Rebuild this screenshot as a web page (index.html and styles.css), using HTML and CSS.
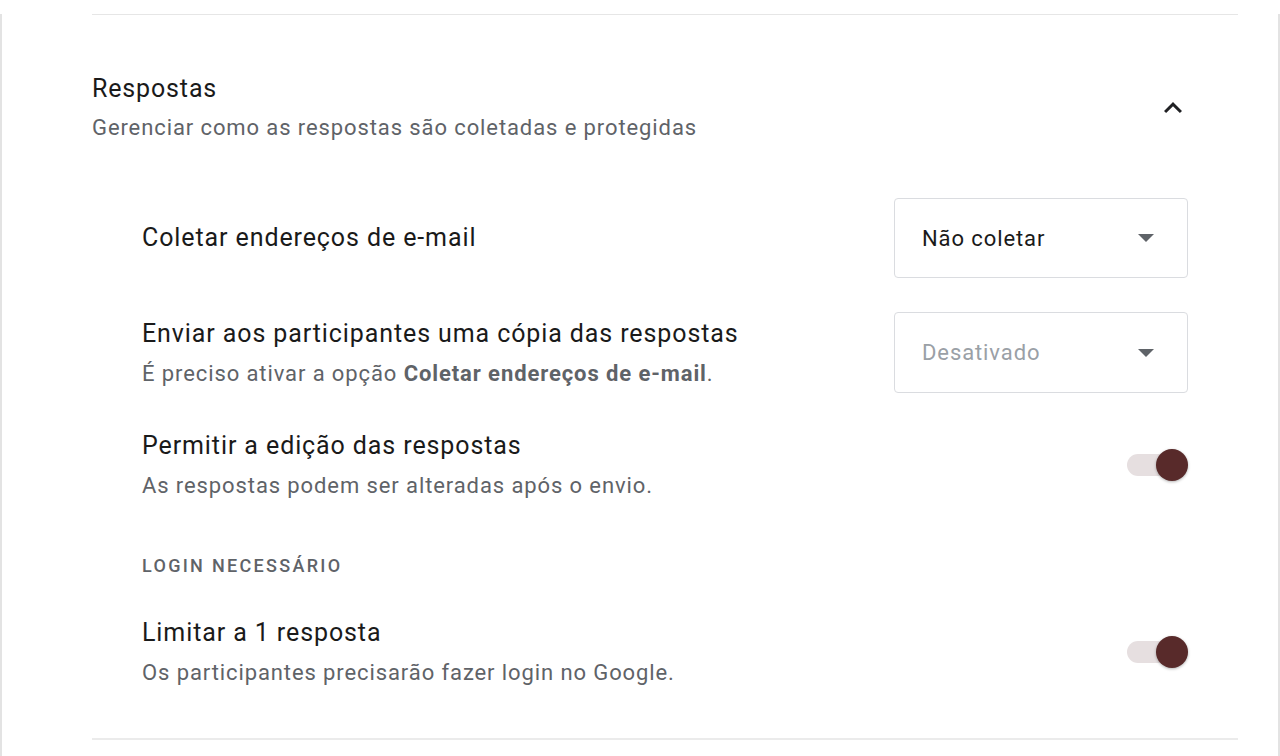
FILE: index.html
```html
<!DOCTYPE html>
<html lang="pt-BR">
<head>
    <meta charset="UTF-8">
    <meta name="viewport" content="width=device-width, initial-scale=1.0">
    <title>Respostas</title>
    <link rel="stylesheet" href="styles.css">
</head>
<body>

    <div class="page">
        <div class="section">
            <div class="section-header">
                <div>
                    <h2>Respostas</h2>
                    <p class="section-desc">Gerenciar como as respostas são coletadas e protegidas</p>
                </div>
                <button class="collapse" aria-label="Recolher">
                    <svg width="36" height="36" viewBox="0 0 24 24"><path d="M7.41 15.41L12 10.83l4.59 4.58L18 14l-6-6-6 6z" fill="#202124"/></svg>
                </button>
            </div>

            <div class="items">
                <div class="item">
                    <div class="item-text">
                        <div class="item-title">Coletar endereços de e-mail</div>
                    </div>
                    <div class="select">
                        <span>Não coletar</span>
                        <span class="arrow"></span>
                    </div>
                </div>

                <div class="item">
                    <div class="item-text">
                        <div class="item-title">Enviar aos participantes uma cópia das respostas</div>
                        <div class="item-desc">É preciso ativar a opção <b>Coletar endereços de e-mail</b>.</div>
                    </div>
                    <div class="select disabled">
                        <span>Desativado</span>
                        <span class="arrow"></span>
                    </div>
                </div>

                <div class="item">
                    <div class="item-text">
                        <div class="item-title">Permitir a edição das respostas</div>
                        <div class="item-desc">As respostas podem ser alteradas após o envio.</div>
                    </div>
                    <div class="toggle on"><span class="thumb"></span></div>
                </div>

                <div class="label">LOGIN NECESSÁRIO</div>

                <div class="item">
                    <div class="item-text">
                        <div class="item-title">Limitar a 1 resposta</div>
                        <div class="item-desc">Os participantes precisarão fazer login no Google.</div>
                    </div>
                    <div class="toggle on"><span class="thumb"></span></div>
                </div>
            </div>
        </div>
    </div>

</body>
</html>
```

FILE: styles.css
```css
body {
    margin: 0;
    font-family: Roboto, "Liberation Sans", Arial, sans-serif;
    background-color: #fff;
    color: #202124;
}
.page {
    min-height: 756px;
    border-left: 2px solid #e3e3e3;
    border-right: 2px solid #e3e3e3;
    padding: 0 40px 0 90px;
    box-sizing: border-box;
}
.section {
    border-top: 1px solid #e6e6e6;
    border-bottom: 2px solid #ebebeb;
    margin-top: 14px;
    padding: 56px 0 49px;
}
.section-header {
    display: flex;
    justify-content: space-between;
    align-items: center;
    padding-right: 47px;
}
h2 {
    margin: 0;
    font-size: 25px;
    font-weight: 400;
    line-height: 36px;
    letter-spacing: 0.85px;
    color: #1a1a1a;
}
.section-desc {
    margin: 5px 0 0;
    font-size: 22px;
    line-height: 32px;
    color: #5f6368;
    letter-spacing: 0.9px;
}
.collapse {
    border: none;
    background: none;
    padding: 0;
    width: 36px;
    height: 36px;
}
.collapse svg {
    display: block;
}
.items {
    padding: 54px 50px 0;
}
.item {
    display: flex;
    justify-content: space-between;
    align-items: center;
    margin-bottom: 35px;
}
.item:first-child {
    margin-bottom: 34px;
}
.item:last-child {
    margin-bottom: 0;
}
.item-title {
    font-size: 25px;
    line-height: 36px;
    letter-spacing: 0.9px;
    color: #1a1a1a;
}
.item-desc {
    margin-top: 6px;
    font-size: 22px;
    line-height: 32px;
    color: #5f6368;
    letter-spacing: 0.9px;
}
.item-desc b {
    font-weight: 700;
}
.select {
    width: 294px;
    height: 80px;
    box-sizing: border-box;
    border: 1px solid #dadce0;
    border-radius: 4px;
    display: flex;
    align-items: center;
    justify-content: space-between;
    padding: 0 33px 0 27px;
    font-size: 22px;
    letter-spacing: 0.9px;
    color: #1a1a1a;
}
.select.disabled {
    height: 81px;
    color: #9aa0a6;
}
.arrow {
    width: 0;
    height: 0;
    border-left: 8px solid transparent;
    border-right: 8px solid transparent;
    border-top: 8px solid #5f6368;
}
.toggle {
    position: relative;
    width: 54px;
    height: 22px;
    border-radius: 11px;
    background-color: #e6dfe0;
    margin-right: 7px;
}
.toggle .thumb {
    position: absolute;
    top: -5px;
    right: -7px;
    width: 32px;
    height: 32px;
    border-radius: 50%;
    background-color: #582a2a;
    box-shadow: 0 1px 3px rgba(0,0,0,0.3);
}
.label {
    padding-top: 17px;
    font-size: 18px;
    line-height: 24px;
    font-weight: 500;
    letter-spacing: 2.3px;
    color: #5f6368;
    margin-bottom: 37px;
}
```
